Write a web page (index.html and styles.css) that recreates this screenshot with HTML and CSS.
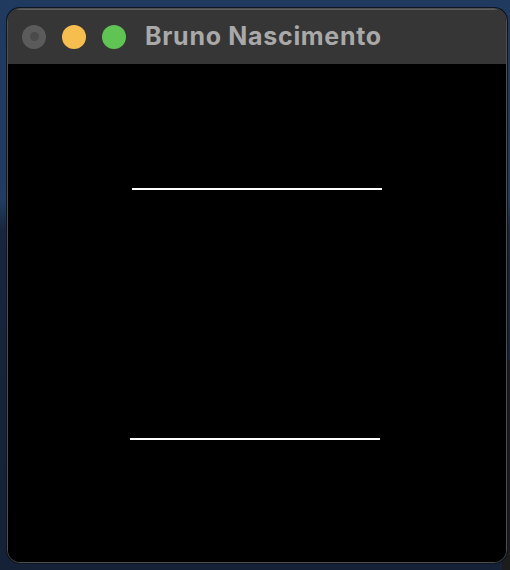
FILE: index.html
```html
<!DOCTYPE html>
<html>
<head>
<meta charset="utf-8">
<link rel="stylesheet" href="styles.css">
</head>
<body>
<div class="desk">
  <div class="window">
    <div class="titlebar">
      <div class="lights">
        <span class="light close"><span class="dot"></span></span>
        <span class="light min"></span>
        <span class="light max"></span>
      </div>
      <div class="title">Bruno Nascimento</div>
    </div>
    <div class="content">
      <svg class="drawing" width="498" height="499" viewBox="0 0 498 499">
        <line x1="124" y1="125" x2="374" y2="125" stroke="#ffffff" stroke-width="2"/>
        <line x1="122" y1="375" x2="372" y2="375" stroke="#ffffff" stroke-width="2"/>
      </svg>
    </div>
  </div>
  <div class="otherwin"></div>
</div>
</body>
</html>
```

FILE: styles.css
```css
html, body {
  margin: 0;
  padding: 0;
  width: 510px;
  height: 570px;
  overflow: hidden;
}
body {
  background: linear-gradient(180deg, #1f3a5e 0px, #213c60 200px, #17263d 230px, #142136 570px);
  font-family: "Inter", "Liberation Sans", sans-serif;
}
.desk {
  position: relative;
  width: 510px;
  height: 570px;
  padding: 8px 0 0 7px;
  box-sizing: border-box;
}
.window {
  position: relative;
  z-index: 1;
  width: 500px;
  height: 555px;
  border-radius: 13px;
  overflow: hidden;
  box-sizing: border-box;
  border: 1px solid #4f4f4f;
  box-shadow: 0 0 0 1px #0d1522;
  display: flex;
  flex-direction: column;
  background: #000;
}
.titlebar {
  height: 55px;
  flex: none;
  background: #363636;
  box-shadow: inset 0 1px 0 #5e5e5e;
  display: flex;
  align-items: center;
  padding-left: 14px;
}
.lights {
  display: flex;
  gap: 16px;
  align-items: center;
}
.light {
  width: 24px;
  height: 24px;
  border-radius: 50%;
  display: flex;
  align-items: center;
  justify-content: center;
}
.close { background: #5b5b5b; }
.close .dot {
  width: 9px;
  height: 9px;
  border-radius: 50%;
  background: #4a4a4a;
}
.min { background: #f6be4f; }
.max { background: #5fc454; }
.title {
  margin-left: 19px;
  color: #a9a9a9;
  font-weight: 700;
  font-size: 25px;
  letter-spacing: 0.7px;
  line-height: 1;
  padding-bottom: 1px;
}
.content {
  flex: 1;
  background: #000;
}
.drawing { display: block; }
.otherwin {
  position: absolute;
  right: 0;
  top: 360px;
  width: 8px;
  height: 210px;
  background: #1c1c1c;
}
```
